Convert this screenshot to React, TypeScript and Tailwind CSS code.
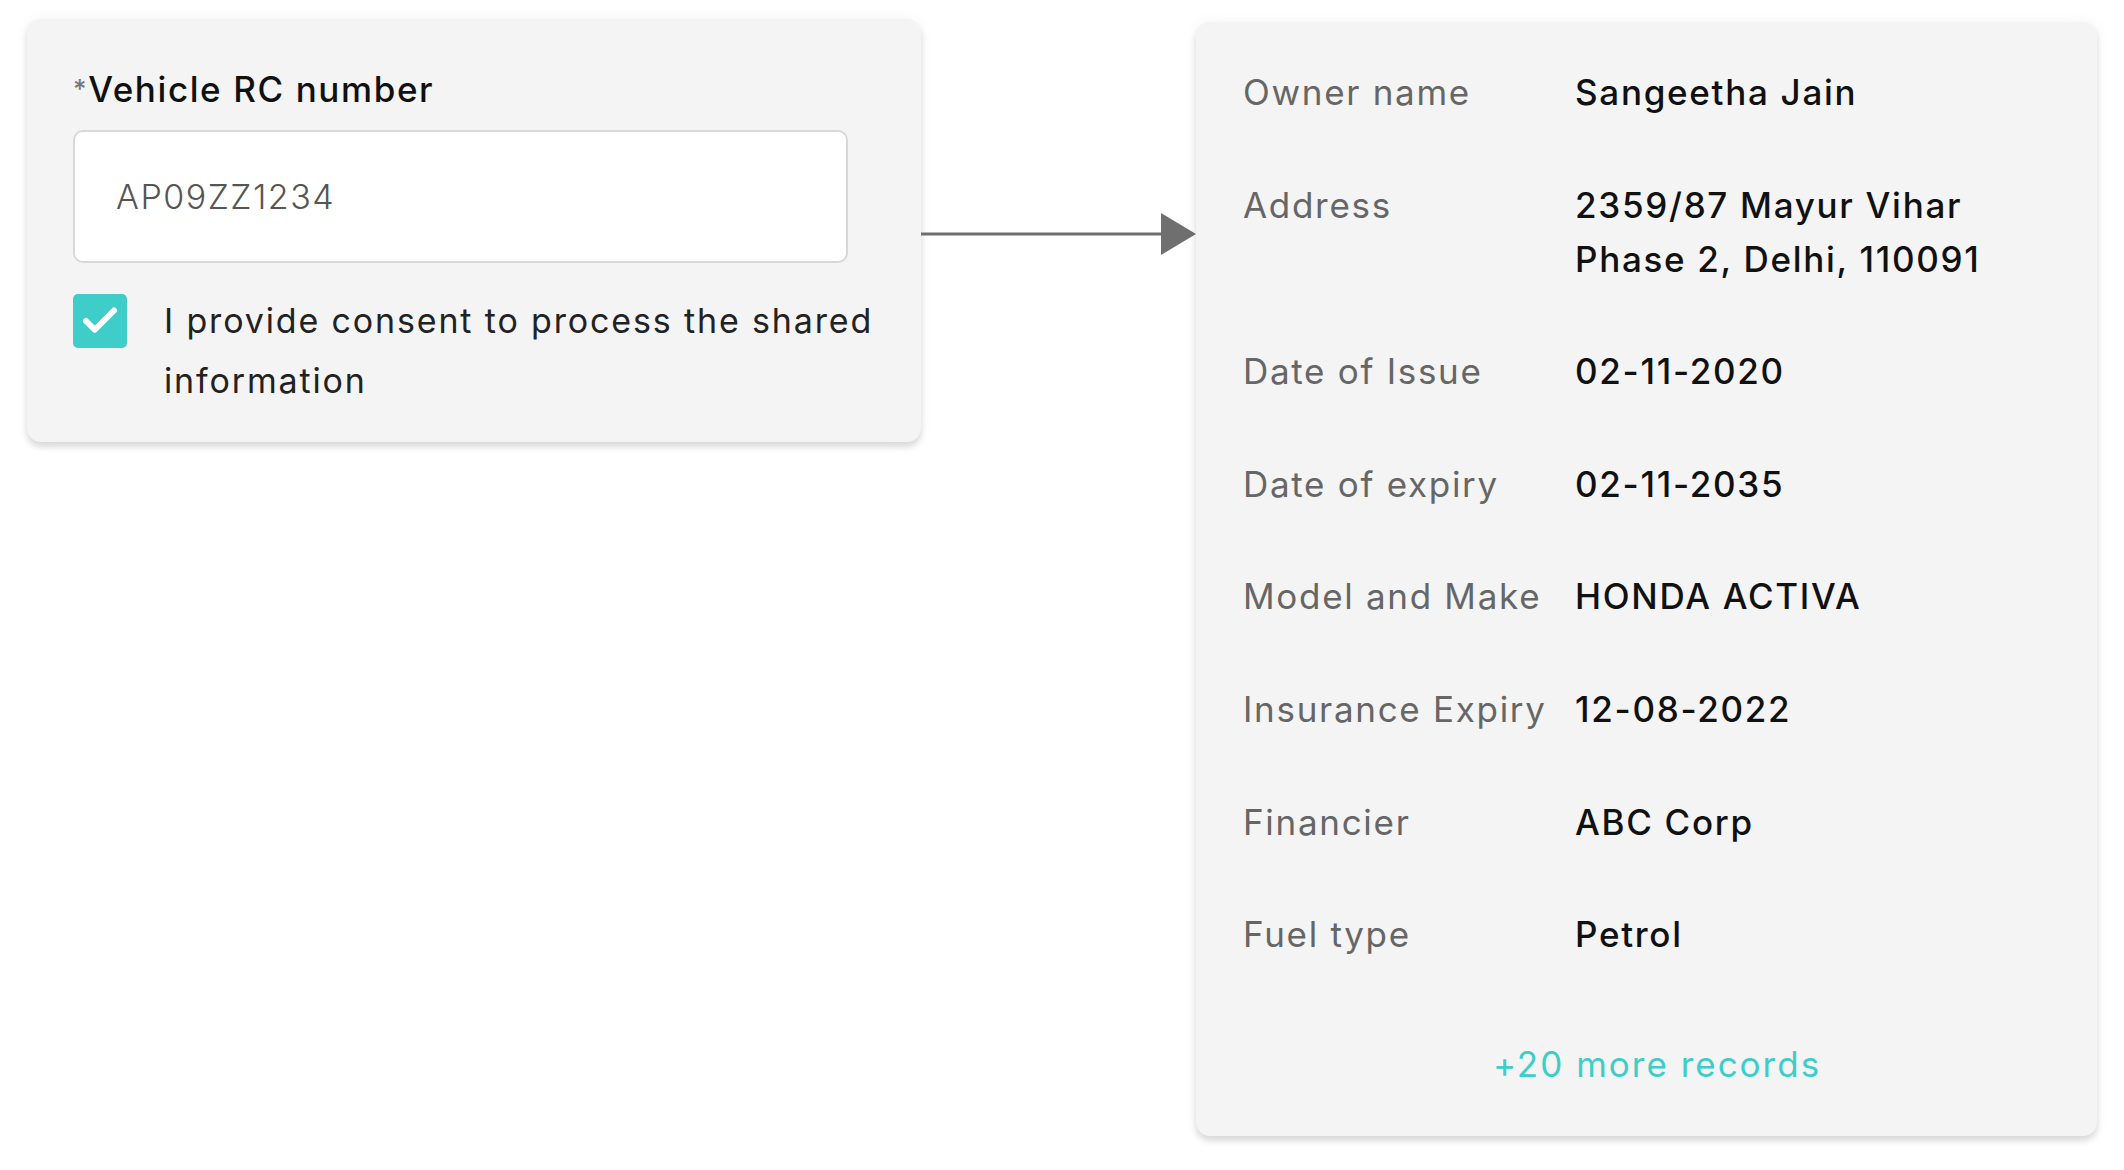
import { Check } from "lucide-react";

const rows: { label: string; value: string[] }[] = [
    { label: "Owner name", value: ["Sangeetha Jain"] },
    { label: "Address", value: ["2359/87 Mayur Vihar", "Phase 2, Delhi, 110091"] },
    { label: "Date of Issue", value: ["02-11-2020"] },
    { label: "Date of expiry", value: ["02-11-2035"] },
    { label: "Model and Make", value: ["HONDA ACTIVA"] },
    { label: "Insurance Expiry", value: ["12-08-2022"] },
    { label: "Financier", value: ["ABC Corp"] },
    { label: "Fuel type", value: ["Petrol"] },
];

const App = () => {
    return (
        <div className="w-[2124px] h-[1170px] bg-white flex items-start pl-[27px] pt-[19px] font-['Inter',sans-serif]">
            {/* input card */}
            <div className="w-[894px] bg-[#f4f4f4] rounded-[14px] shadow-[0_5px_6px_rgba(0,0,0,0.13),0_0_14px_rgba(0,0,0,0.05)] pl-[46px] pr-[30px] pt-[46px] pb-[31px]">
                <div className="text-[35px] leading-[48px] font-medium text-[#111] tracking-[1.6px]">
                    <span className="text-[#777] text-[26px] align-top">*</span>Vehicle RC number
                </div>
                <div className="mt-[17px] w-[775px] h-[133px] bg-white border-2 border-[#d8d8d8] rounded-[10px] flex items-center pl-[41px]">
                    <span className="text-[34px] text-[#555] tracking-[1.5px] font-light">AP09ZZ1234</span>
                </div>
                <div className="mt-[28px] flex items-start gap-[37px]">
                    <div className="mt-[3px] w-[54px] h-[54px] shrink-0 rounded-[5px] bg-[#3ecdc9] flex items-center justify-center">
                        <Check className="text-white" size={42} strokeWidth={3.4} />
                    </div>
                    <p className="text-[34px] leading-[60px] text-[#222] tracking-[1.85px]">
                        I provide consent to process the shared information
                    </p>
                </div>
            </div>

            {/* arrow */}
            <div className="mt-[194px] w-[275px] h-[42px]">
                <svg width="275" height="42" viewBox="0 0 275 42">
                    <line x1="0" y1="21" x2="244" y2="21" stroke="#6f6f6f" strokeWidth="3" />
                    <polygon points="240,0 275,21 240,42" fill="#6f6f6f" />
                </svg>
            </div>

            {/* details card */}
            <div className="mt-[3px] w-[901px] bg-[#f4f4f4] rounded-[14px] shadow-[0_5px_6px_rgba(0,0,0,0.13),0_0_14px_rgba(0,0,0,0.05)] pl-[47px] pr-[40px] pt-[43px] pb-[45px]">
                <div className="flex flex-col gap-[58.6px]">
                    {rows.map((r) => (
                        <div key={r.label} className="flex text-[35px] leading-[54px] tracking-[1.7px]">
                            <div className="w-[332px] shrink-0 text-[#666]">{r.label}</div>
                            <div className="font-medium text-[#111]">
                                {r.value.map((v) => (
                                    <div key={v}>{v}</div>
                                ))}
                            </div>
                        </div>
                    ))}
                </div>
                <div className="mt-[76px] text-center text-[35px] leading-[54px] tracking-[2px] text-[#3ecdc9] pl-[14px]">
                    +20 more records
                </div>
            </div>
        </div>
    );
};

export default App;
